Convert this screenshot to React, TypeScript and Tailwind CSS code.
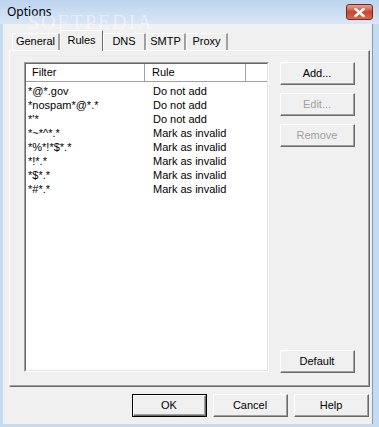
import React from "react";

const rules: [string, string][] = [
  ["*@*.gov", "Do not add"],
  ["*nospam*@*.*", "Do not add"],
  ["*'*", "Do not add"],
  ["*~*^*.*", "Mark as invalid"],
  ["*%*!*$*.*", "Mark as invalid"],
  ["*!*.*", "Mark as invalid"],
  ["*$*.*", "Mark as invalid"],
  ["*#*.*", "Mark as invalid"],
];

function Btn({
  label,
  disabled,
  isDefault,
  className,
}: {
  label: string;
  disabled?: boolean;
  isDefault?: boolean;
  className?: string;
}) {
  // classic 3D button: white top-left, dark bottom-right
  const inner = (
    <div className="w-full h-full border-t border-l border-t-white border-l-white border-r border-b border-r-[#696969] border-b-[#696969]">
      <div className="w-full h-full border-r border-b border-r-[#a0a0a0] border-b-[#a0a0a0] flex items-center justify-center bg-[#f0f0f0]">
        <span className={disabled ? "text-[#a0a0a0]" : "text-black"}>{label}</span>
      </div>
    </div>
  );
  return (
    <div
      className={
        "w-[75px] h-[23px] " +
        (isDefault ? "border border-black " : "") +
        (className ?? "")
      }
    >
      {inner}
    </div>
  );
}

function Tab({ label, active, w }: { label: string; active?: boolean; w: string }) {
  if (active) {
    return (
      <div
        className={
          "relative z-10 h-[21px] -mb-px bg-[#f0f0f0] border-t border-l border-t-white border-l-white border-r border-r-[#696969] flex items-start justify-center pt-[3px] " +
          w
        }
      >
        {label}
      </div>
    );
  }
  return (
    <div
      className={
        "h-[17px] bg-[#f0f0f0] border-t border-l border-t-white border-l-white border-r-2 border-r-[#a0a0a0] flex items-start justify-center pt-[1px] " +
        w
      }
    >
      {label}
    </div>
  );
}

export default function App() {
  return (
    <div
      className="w-[379px] h-[427px] bg-[#c4dbf2] flex flex-col text-[11px] leading-[13px] text-black"
      style={{ fontFamily: '"Liberation Sans", Arial, sans-serif' }}
    >
      {/* title bar */}
      <div className="relative h-[24px] flex items-start pl-[7px] pr-[6px] bg-gradient-to-b from-[#bdd4ee] to-[#d9e7f6]">
        <span className="mt-[5px] text-[12px] leading-[14px]" style={{ fontFamily: '"Noto Sans", sans-serif' }}>
          Options
        </span>
        {/* watermark */}
        <span
          className="absolute left-[28px] top-[12px] text-[20px] leading-[20px] tracking-[2px] text-white/45 pointer-events-none"
          style={{ fontFamily: '"Liberation Serif", serif' }}
        >
          SOFTPEDIA
        </span>
        <div className="ml-auto mt-[4px] w-[27px] h-[16px] rounded-[3px] border border-[#6d2a23] bg-gradient-to-b from-[#e8a493] via-[#c9452f] to-[#d9684f] flex items-center justify-center">
          <svg width="11" height="9" viewBox="0 0 11 9">
            <path d="M1.5 1 L9.5 8 M9.5 1 L1.5 8" stroke="#fff" strokeWidth="2.4" strokeLinecap="square" />
          </svg>
        </div>
      </div>

      {/* client */}
      <div className="flex-1 ml-[3px] mr-[6px] mb-[3px] bg-[#f0f0f0] border-r border-r-[#8a9aaa] flex flex-col pl-[6px] pr-[3px] pt-[5px]">
        {/* tabs */}
        <div className="flex items-end h-[21px] pl-[3px]">
          <Tab label="General" w="w-[48px]" />
          <Tab label="Rules" active w="w-[43px]" />
          <Tab label="DNS" w="w-[43px]" />
          <Tab label="SMTP" w="w-[40px]" />
          <Tab label="Proxy" w="w-[42px]" />
        </div>

        {/* tab page */}
        <div className="w-[361px] h-[337px] border-t border-l border-t-white border-l-white border-r border-b border-r-[#696969] border-b-[#696969]">
          <div className="w-full h-full border-r border-b border-r-[#a0a0a0] border-b-[#a0a0a0] flex pl-[14px] pt-[11px] pb-[13px]">
            {/* list view */}
            <div className="w-[245px] h-full border-t border-l border-t-[#a0a0a0] border-l-[#a0a0a0] border-r border-b border-r-white border-b-white">
              <div className="w-full h-full border-t border-l border-t-[#696969] border-l-[#696969] border-r border-b border-r-[#e3e3e3] border-b-[#e3e3e3] bg-white flex flex-col">
                <div className="flex h-[18px] bg-[#f0f0f0] border-b border-b-[#a0a0a0]">
                  <div className="w-[119px] pl-[6px] flex items-center bg-white border-r border-r-[#a0a0a0]">Filter</div>
                  <div className="w-[101px] pl-[7px] flex items-center bg-white border-r border-r-[#a0a0a0]">Rule</div>
                  <div className="flex-1 bg-white" />
                </div>
                <div className="flex flex-col pt-[2px]">
                  {rules.map(([f, r]) => (
                    <div key={f} className="flex h-[14px] items-center">
                      <div className="w-[119px] pl-[2px]">{f}</div>
                      <div className="pl-[8px]">{r}</div>
                    </div>
                  ))}
                </div>
              </div>
            </div>

            {/* side buttons */}
            <div className="flex flex-col ml-[11px] h-full">
              <Btn label="Add..." />
              <Btn label="Edit..." disabled className="mt-[8px]" />
              <Btn label="Remove" disabled className="mt-[8px]" />
              <Btn label="Default" className="mt-auto -mb-[1px]" />
            </div>
          </div>
        </div>

        {/* bottom buttons */}
        <div className="flex justify-end gap-[6px] pt-[7px]">
          <Btn label="OK" isDefault />
          <Btn label="Cancel" />
          <Btn label="Help" />
        </div>
      </div>
    </div>
  );
}
